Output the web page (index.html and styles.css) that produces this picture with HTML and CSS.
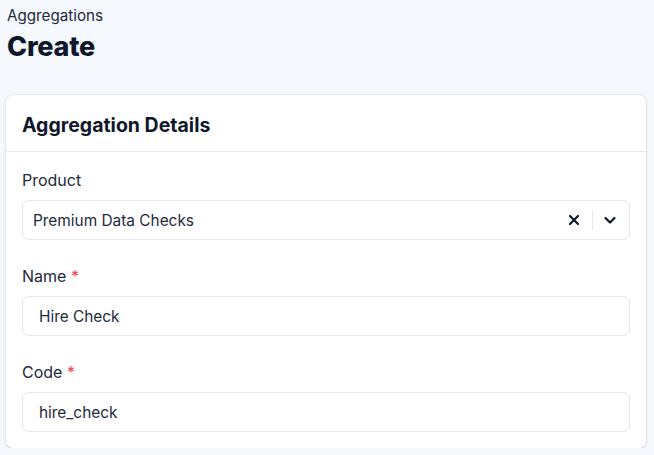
FILE: index.html
```html
<!DOCTYPE html>
<html>
<head>
<meta charset="utf-8">
<link rel="stylesheet" href="styles.css">
</head>
<body>
<div class="page">
  <div class="crumb">Aggregations</div>
  <h1 class="title">Create</h1>
  <div class="card">
    <div class="card-head">Aggregation Details</div>
    <div class="card-body">
      <div class="field">
        <label class="label">Product</label>
        <div class="select">
          <span class="select-value">Premium Data Checks</span>
          <span class="select-ctrls">
            <svg class="ic-x" width="12" height="12" viewBox="0 0 12 12"><path d="M2 2L10 10M10 2L2 10" stroke="#0f172a" stroke-width="2.2" stroke-linecap="round"/></svg>
            <span class="sep"></span>
            <svg class="ic-chev" width="14" height="14" viewBox="0 0 14 14"><path d="M2.5 5L7 9.5L11.5 5" fill="none" stroke="#0f172a" stroke-width="2.2" stroke-linecap="round" stroke-linejoin="round"/></svg>
          </span>
        </div>
      </div>
      <div class="field">
        <label class="label">Name <span class="req">*</span></label>
        <div class="input">Hire Check</div>
      </div>
      <div class="field">
        <label class="label">Code <span class="req">*</span></label>
        <div class="input">hire_check</div>
      </div>
    </div>
  </div>
</div>
</body>
</html>
```

FILE: styles.css
```css
html, body {
  margin: 0;
  padding: 0;
  background: #f5f8fc;
  font-family: Inter, "Noto Sans", "Liberation Sans", sans-serif;
  color: #0f172a;
}
.page {
  padding: 6px 8px 0 6px;
}
.crumb {
  font-size: 15.2px;
  padding-left: 1px;
  line-height: 20px;
  color: #1e293b;
}
.title {
  margin: 5px 0 0 1px;
  font-size: 27px;
  font-weight: 800;
  line-height: 32px;
  letter-spacing: -0.2px;
}
.card {
  margin-top: 32px;
  background: #fff;
  border-radius: 7px;
  box-shadow: 0 1px 3px rgba(15, 23, 42, 0.12), 0 0 0 1px rgba(226, 232, 240, 0.6);
  width: 640px;
}
.card-head {
  height: 57px;
  box-sizing: border-box;
  padding: 3px 16px 0 16px;
  display: flex;
  align-items: center;
  font-size: 19.5px;
  font-weight: 700;
  border-bottom: 1px solid #e2e8f0;
}
.card-body {
  padding: 18px 16px 16px 16px;
  display: flex;
  flex-direction: column;
  gap: 26px;
}
.field {
  display: flex;
  flex-direction: column;
  gap: 10px;
}
.label {
  font-size: 16px;
  line-height: 20px;
  color: #1e293b;
}
.req {
  color: #ef4444;
}
.select, .input {
  height: 40px;
  box-sizing: border-box;
  border: 1px solid #e2e8f0;
  border-radius: 6px;
  display: flex;
  align-items: center;
  font-size: 15.4px;
  color: #1e293b;
}
.select {
  padding: 0 12px 0 10px;
  justify-content: space-between;
}
.input {
  padding: 0 16px;
}
.select-ctrls {
  display: flex;
  align-items: center;
}
.ic-x {
  margin-right: 12px;
}
.sep {
  width: 1px;
  height: 20px;
  background: #e2e8f0;
  margin-right: 10px;
}
```
